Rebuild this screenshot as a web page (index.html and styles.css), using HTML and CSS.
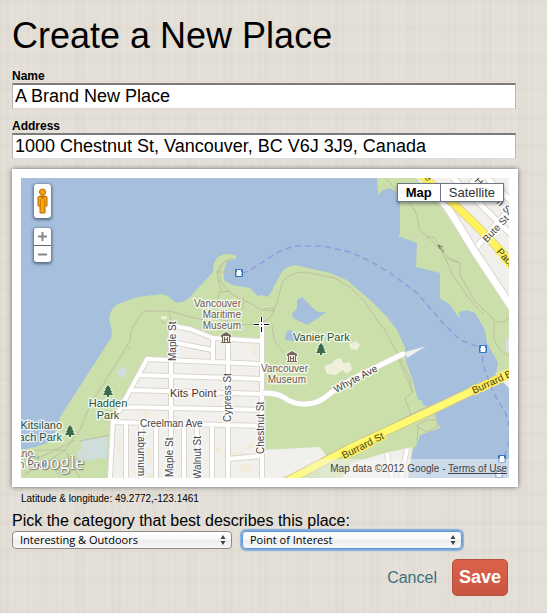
FILE: index.html
```html
<!DOCTYPE html>
<html lang="en">
<head>
<meta charset="utf-8">
<meta name="viewport" content="width=device-width, initial-scale=1">
<title>Create a New Place</title>
<link rel="stylesheet" href="styles.css">
</head>
<body>
<form class="place-form">
  <h1 class="title">Create a New Place</h1>

  <div class="field">
    <label for="name">Name</label>
    <input id="name" type="text" value="A Brand New Place">
  </div>
  <div class="field">
    <label for="address">Address</label>
    <input id="address" type="text" value="1000 Chestnut St, Vancouver, BC V6J 3J9, Canada">
  </div>

  <div class="map-card">
    <div class="map">
      <svg class="map-art" viewBox="21 178 488 300" preserveAspectRatio="xMidYMid slice" role="img" aria-label="Map of Kits Point, Vancouver">
        <defs>
          <g id="tree"><path d="M0-6 3-2H2L4 1H3L5 4H1V6H-1V4H-5L-3 1H-4L-2-2H-3Z" fill="#376b4b" stroke="#e2edcf" stroke-width="2" paint-order="stroke"/></g>
          <g id="museum"><path d="M0-6 5-3V-1H4V4H5V5H-5V4H-4V-1H-5V-3Z" fill="#77665c" stroke="#f0f3e5" stroke-width="2" paint-order="stroke"/><path d="M-3-2H3V4H-3Z" fill="#eee9df"/><path d="M-1.500-1V4M1.500-1V4M-1 1.500H1" stroke="#77665c" fill="none"/></g>
          <g id="ferry"><rect x="-4" y="-4" width="8" height="8" rx="1" fill="#3677c5"/><path d="M-2-3H2V-1L3 0 2 2 3 3H-3L-2 2-3 0-2-1Z" fill="#fff"/></g>
        </defs>

        <rect x="21" y="178" width="488" height="300" fill="#a5bfdd"/>

        <!-- western shore -->
        <path fill="#cadfaa" d="M21 450 35 447 47 443 55 433 60 417 111 338 112 330 109 320 110 314Q112 308 118 304L138 297 162 294 168 296 175 302Q181 304 188 299L213 272 214 263Q218 254 227 254L235 255 237 258 228 261Q223 266 224 280L232 285 250 288 258 296 262 295 267 297Q272 292 273 288L282 272Q285 267 295 265L330 273 347 280 370 300 387 317 397 330 405 347 406 362 412 378 418 400 421 400 423 405 432 407 440 428 420 435 418 442 413 450 408 478H21Z"/>
        <!-- eastern shore -->
        <path fill="#cadfaa" d="M377 178 378 195 383 190 390 188 397 192 400 202V233L398 236 417 243 416 267 440 273V298L450 305 457 315 460 318 459 312 467 310 475 313 485 330 487 343 492 352 498 363 496 373 509 388V178Z"/>
        <path fill="#f2f0ed" d="M422 178H509V308Z"/>
        <path fill="#f2f0ed" d="M495 374 509 368V388Z"/>
        <path fill="#ddd" d="M506 338H509V352H506Z"/>

        <!-- ponds, parking and buildings -->
        <path fill="#a5bfdd" d="M302 297 306 301 313 308 318 312 326 312 318 318 307 325 293 318 292 314 297 308V300ZM286 332 291 330 296 334 300 337 294 341 285 340Z"/>
        <path fill="#cfdddb" d="M120 366 128 370 123 379 116 374ZM82 439 107 437V458L78 461 77 451 82 450Z"/>
        <path fill="#eef0dc" d="M161 317 167 316V319L161 320ZM324 366 333 363 334 360 341 358 343 363 350 362 352 369 347 374 342 370 336 375 327 374ZM349 344 356 341 360 345 357 350 351 349Z"/>
        <path fill="#edf0ea" d="M405 352 416 349 426 346 407 358Z"/>

        <!-- footpaths -->
        <g fill="none" stroke="#bfc0a1" stroke-width="1">
          <path d="M131 331 140 315 145 311 170 311 190 317 205 320M169 311 172 325M131 331 130 341 118 361 90 405 80 430 65 450 50 460M128 347 131 350M162 319V323H168M21 463 45 455 75 440M35 450 65 450 80 478M110 435 80 441M60 478 50 460 25 474"/>
          <path d="M233 258Q222 260 220 270V280Q228 296 250 303L262 310 275 311M228 260Q218 264 217 275L221 290 216 303M221 292 230 291M243 297V309M210 316 240 325 258 324 270 318 277 303 282 283Q288 272 305 272L335 278 350 287 365 302 377 320 385 330 410 378 412 393 405 398 411 415M263 309 275 308M272 325 274 340 284 353M398 358 413 392"/>
          <path d="M216 272H235"/>
          <path d="M385 178 397 190 408 200 417 215 419 229 434 243 448 257 460 263V275L474 300 494 320M427 236 435 238 445 258 453 275 470 300 484 315M459 263 445 258M494 322 502 322 509 318M494 322V340L500 350 509 356"/>
          <path d="M344 449 410 415 431 405M327 455 350 444M416 426 426 420 436 420 438 426 427 432 418 427 417 442"/>
        </g>

        <!-- Kits Point blocks -->
        <path fill="#f2f0ed" d="M168 325 190 329 213 338 262 341V450L320 447 327 457 285 478H110L113 420 147 358H170Z"/>
        <path fill="#f2f0ed" d="M342 478 352 463 385 453 412 447 408 478Z"/>
        <path fill="#f1ecdb" d="M252 346H258V355H252ZM142 412H150V418H142ZM117 441H122V454H117ZM146 448H152V463H146ZM216 447H221V452H216ZM247 443H256V449H247ZM232 452H245V456H232ZM240 464H252V472H240ZM147 473H155V478H147Z"/>
        <g fill="none" stroke-linejoin="round">
          <path d="M168 325 190 329 213 338 262 341M171 342 213 350M113 422 147 359 190 361 262 364M138 375 262 379M131 390 262 394M122 407 262 410M113 422 262 426M113 420 110 478M171 325V478M213 338V362M228 338V478M262 325V478M126 424V478M141 424V478M156 424V478M184 426V478M197 426V478M212 426V478M228 459 260 456M387 454 392 478M407 449 401 478" stroke="#dad6ce" stroke-width="6"/>
          <path d="M168 325 190 329 213 338 262 341M171 342 213 350M113 422 147 359 190 361 262 364M138 375 262 379M131 390 262 394M122 407 262 410M113 422 262 426M113 420 110 478M171 325V478M213 338V362M228 338V478M262 325V478M126 424V478M141 424V478M156 424V478M184 426V478M197 426V478M212 426V478M228 459 260 456M387 454 392 478M407 449 401 478" stroke="#fff" stroke-width="4"/>
          <path d="M262 393Q277 393 283 397 293 404 303 404 316 405 327 396L337 388 360 375 403 354" stroke="#dad6ce" stroke-width="6"/>
          <path d="M262 393Q277 393 283 397 293 404 303 404 316 405 327 396L337 388 360 375 403 354" stroke="#fff" stroke-width="5" stroke-linecap="round"/>
          <!-- downtown streets -->
          <path d="M473 251 515 203M453 178 515 238M487 178 515 205M466 190 480 174" stroke="#dad6ce" stroke-width="7"/>
          <path d="M473 251 515 203M453 178 515 238M487 178 515 205M466 190 480 174" stroke="#fff" stroke-width="5"/>
          <path d="M418 174 448 208 475 252 512 308" stroke="#dad6ce" stroke-width="9"/>
          <path d="M418 174 448 208 475 252 512 308" stroke="#fff" stroke-width="7"/>
          <path d="M420 174 453 203 477 226 514 265" stroke="#dfd29a" stroke-width="9"/>
          <path d="M420 174 453 203 477 226 514 265" stroke="#fff25b" stroke-width="7"/>
          <path d="M285 482 350 448 430 411 512 372" stroke="#cec68f" stroke-width="9"/>
          <path d="M285 482 350 448 430 411 512 372" stroke="#fffa70" stroke-width="7"/>
        </g>
        <path d="M438 245 444 252M438 245 443 247M438 245 440 249" stroke="#777c62" fill="none"/>

        <!-- ferry routes -->
        <path d="M242 273 249 271 275 254Q285 248 297 246H323L350 252 370 261 390 273 417 293 443 323 460 340 482 348 483 365 493 392 505 412Q512 430 508 445L499 472" fill="none" stroke="#8e9edc" stroke-width="1.500" stroke-dasharray="6 4"/>
        <use href="#ferry" x="239" y="273"/>
        <use href="#ferry" x="483" y="349"/>
        <use href="#ferry" x="502" y="459"/>
        <use href="#ferry" x="499" y="474"/>
        <use href="#tree" x="321" y="349"/>
        <use href="#tree" x="108" y="391"/>
        <use href="#tree" x="70" y="431"/>
        <use href="#museum" x="226" y="338"/>
        <use href="#museum" x="292" y="357"/>

        <g class="street">
          <text x="140" y="427">Creelman Ave</text>
          <text transform="translate(176 361) rotate(-90)">Maple St</text>
          <text transform="translate(173 477) rotate(-90)">Maple St</text>
          <text transform="translate(138 431) rotate(90)">Laburnum St</text>
          <text transform="translate(201 479) rotate(-90)">Walnut St</text>
          <text transform="translate(231 422) rotate(-90)">Cypress St</text>
          <text transform="translate(264 454) rotate(-90)">Chestnut St</text>
          <text transform="translate(336 393) rotate(-28)">Whyte Ave</text>
          <text transform="translate(487 243) rotate(-47)">Bute St</text>
          <text transform="translate(474 181) rotate(45)">Ho</text>
          <text transform="translate(496 203) rotate(45)">n St</text>
        </g>
        <g class="street major">
          <text transform="translate(344 459) rotate(-27)">Burrard St</text>
          <text transform="translate(474 394) rotate(-25)">Burrard Bridge</text>
          <text transform="translate(496 252) rotate(48)">Pacific</text>
          <text transform="translate(424 178) rotate(45)">e</text>
        </g>
        <g class="poi" text-anchor="end">
          <text x="241" y="307">Vancouver</text>
          <text x="241" y="318">Maritime</text>
          <text x="241" y="329">Museum</text>
          <text x="308" y="372">Vancouver</text>
          <text x="306" y="383">Museum</text>
        </g>
        <g class="park">
          <text x="293" y="341">Vanier Park</text>
          <text x="108" y="407" text-anchor="middle">Hadden</text>
          <text x="108" y="419" text-anchor="middle">Park</text>
          <text x="62" y="429" text-anchor="end">Kitsilano</text>
          <text x="62" y="441" text-anchor="end">Beach Park</text>
        </g>
        <text class="district" x="170" y="397">Kits Point</text>
        <g class="poi" text-anchor="end">
          <text x="33" y="457">Kitsilano</text>
          <text x="47" y="468">Ocean Pool</text>
        </g>
        <path d="M254 324.500H269M261.500 317V332" stroke="#fff" stroke-width="3"/>
        <path d="M254 324.500H259M264 324.500H269M261.500 317V322M261.500 327V332M261 324.500H262" stroke="#000"/>
      </svg>

      <div class="map-tools">
        <button class="pegman" type="button" aria-label="Street View">
          <svg width="11" height="26" viewBox="0 0 11 26"><path d="M3 8H8L10 9V18H8V25H3V18H1V9Z" fill="#f5a700" stroke="#b76514"/><circle cx="5.500" cy="4" r="3" fill="#f5a700" stroke="#b76514"/><path d="M3 8H8L5.500 11Z" fill="#c76308"/><path d="M3.500 11V18M7.500 11V18" stroke="#d18404"/></svg>
        </button>
        <div class="zoom">
          <button type="button" aria-label="Zoom in"><svg width="9" height="9" viewBox="0 0 9 9"><path d="M0 4.500H9M4.500 0V9" stroke="#888" stroke-width="2"/></svg></button>
          <button type="button" aria-label="Zoom out"><svg width="9" height="9" viewBox="0 0 9 9"><path d="M0 4.500H9" stroke="#888" stroke-width="2"/></svg></button>
        </div>
      </div>
      <div class="map-types">
        <button class="active" type="button">Map</button>
        <button type="button">Satellite</button>
      </div>
      <span class="logo">Google</span>
      <div class="credit">Map data ©2012 Google - <a href="#terms">Terms of Use</a></div>
    </div>
  </div>

  <p class="coords">Latitude &amp; longitude: 49.2772,-123.1461</p>

  <label class="prompt" for="category">Pick the category that best describes this place:</label>
  <div class="selects">
    <span class="select"><select id="category"><option>Interesting &amp; Outdoors</option></select><svg width="6" height="10" viewBox="0 0 6 10"><path d="M3 0 5.500 4H.5ZM3 10 .5 6H5.500Z" fill="#444"/></svg></span>
    <span class="select focused"><select aria-label="Subcategory"><option>Point of Interest</option></select><svg width="6" height="10" viewBox="0 0 6 10"><path d="M3 0 5.500 4H.5ZM3 10 .5 6H5.500Z" fill="#444"/></svg></span>
  </div>

  <div class="actions">
    <a href="#cancel">Cancel</a>
    <button class="save" type="submit">Save</button>
  </div>
</form>
</body>
</html>
```
FILE: styles.css
```css
* { box-sizing: border-box; }

body {
  margin: 0;
  min-height: 100vh;
  color: #000;
  font-family: "Liberation Sans", Arial, sans-serif;
  background-color: #e4e0d8;
  background-image:
    repeating-linear-gradient(90deg, rgba(120, 110, 90, .02) 0 1px, transparent 1px 3px, rgba(255, 255, 255, .08) 3px 4px, transparent 4px 7px),
    repeating-linear-gradient(0deg, rgba(120, 110, 90, .02) 0 1px, transparent 1px 4px, rgba(255, 255, 255, .08) 4px 5px, transparent 5px 9px),
    repeating-linear-gradient(90deg, rgba(120, 110, 90, .02) 0 11px, transparent 11px 37px),
    repeating-linear-gradient(0deg, rgba(120, 110, 90, .02) 0 7px, transparent 7px 29px);
}

button, input, select { font-family: inherit; }

.place-form { padding: 14px 29px 16px 12px; }

.title {
  margin: 0 0 11px;
  font-size: 36px;
  font-weight: 400;
  line-height: 44px;
}

.field { margin-bottom: 10px; }

.field label {
  display: block;
  font-size: 12px;
  font-weight: 700;
  line-height: 14px;
}

.field input {
  display: block;
  width: calc(100% - 2px);
  height: 26px;
  padding: 0 2px;
  border: 1px solid #b5b5b5;
  border-top: 2px solid #7c7c7c;
  border-bottom-color: #d8d8d8;
  border-radius: 0;
  background: #fff;
  color: #000;
  font-size: 18px;
  outline: 0;
}

.map-card {
  padding: 9px;
  background: #fff;
  box-shadow: 0 0 5px rgba(0, 0, 0, .55);
}

.map { position: relative; height: 300px; overflow: hidden; }
.map-art { display: block; width: 100%; height: 100%; }

.map-art text {
  font-family: "Liberation Sans", Arial, sans-serif;
  paint-order: stroke;
  stroke: rgba(255, 255, 255, .7);
  stroke-width: 3px;
  stroke-linejoin: round;
}
.map-art .street text { font-size: 10px; fill: #444; }
.map-art .major text { fill: #4b401c; stroke: #fff25b; }
.map-art .poi text { font-size: 10px; fill: #705c53; }
.map-art .park text { font-size: 11px; fill: #285339; }
.map-art .district { font-size: 11px; fill: #54301d; }

.map-tools {
  position: absolute;
  top: 6px;
  left: 13px;
  display: grid;
  gap: 10px;
}

.map-tools button {
  display: flex;
  align-items: center;
  justify-content: center;
  width: 17px;
  height: 17px;
  padding: 0;
  border: 0;
  background: #fff;
}

.map-tools .pegman { height: 34px; }
.pegman, .zoom {
  border-radius: 3px;
  box-shadow: 0 1px 3px 1px rgba(40, 55, 80, .65);
  overflow: hidden;
}
.zoom button + button { border-top: 1px solid #666; }

.map-types {
  position: absolute;
  top: 5px;
  right: 5px;
  display: flex;
  border: 1px solid #6b7686;
  box-shadow: 0 2px 3px rgba(0, 0, 0, .35);
}

.map-types button {
  height: 17px;
  padding: 0 8px;
  border: 0;
  background: #fff;
  color: #333;
  font-size: 13px;
  line-height: 17px;
}
.map-types .active { color: #000; font-weight: 700; border-right: 1px solid #6b7686; }

.logo {
  position: absolute;
  left: 4px;
  bottom: 4px;
  color: #fff;
  font-family: "Liberation Serif", serif;
  font-size: 20px;
  line-height: 24px;
  text-shadow: 0 0 1px #555, 1px 1px 1px #777;
}

.credit {
  position: absolute;
  right: 0;
  bottom: 0;
  padding: 0 2px 0 50px;
  background: linear-gradient(90deg, rgba(245, 245, 245, 0), rgba(245, 245, 245, .5) 50px);
  color: #444;
  font-size: 10px;
  line-height: 19px;
}
.credit a { color: inherit; }

.coords { margin: 6px 9px; font-size: 10px; line-height: 12px; }

.prompt { display: block; font-size: 16px; line-height: 20px; }

.selects { display: flex; gap: 10px; }

.select { position: relative; flex: 0 1 220px; }
.select svg { position: absolute; top: 4px; right: 6px; pointer-events: none; }

.select select {
  display: block;
  width: 100%;
  height: 18px;
  padding: 0 7px;
  appearance: none;
  border: 1px solid #8b8b8b;
  border-radius: 4px;
  background: linear-gradient(#fff, #f6f6f6 50%, #ececec 50%, #f8f8f8);
  color: #000;
  font-family: "Open Sans", "Noto Sans", sans-serif;
  font-size: 11px;
  line-height: 16px;
}
.focused select { border-color: #5d96d2; box-shadow: 0 0 1px 2px #7eabdc; }

.actions {
  display: flex;
  align-items: center;
  justify-content: flex-end;
  gap: 15px;
  margin-top: 10px;
  padding-right: 10px;
}
.actions a { color: #3c717c; font-size: 16px; text-decoration: none; }

.save {
  height: 37px;
  padding: 0 6px;
  border: 1px solid #b84f3e;
  border-radius: 5px;
  background: linear-gradient(#dc624a, #c95643);
  color: #fff;
  font-size: 18px;
  font-weight: 700;
}
```
